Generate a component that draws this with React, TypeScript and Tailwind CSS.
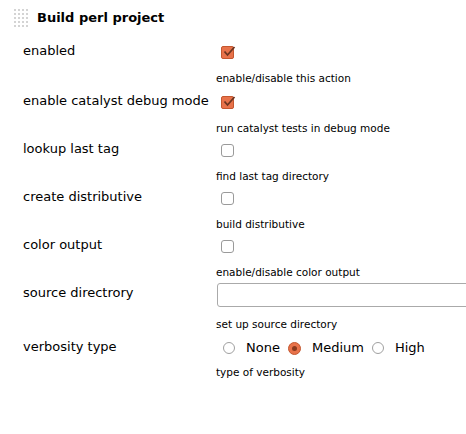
import React from 'react'

type Field = {
  label: string
  help: string
  kind: 'check' | 'text' | 'radio'
  checked?: boolean
}

const fields: Field[] = [
  { label: 'enabled', help: 'enable/disable this action', kind: 'check', checked: true },
  { label: 'enable catalyst debug mode', help: 'run catalyst tests in debug mode', kind: 'check', checked: true },
  { label: 'lookup last tag', help: 'find last tag directory', kind: 'check' },
  { label: 'create distributive', help: 'build distributive', kind: 'check' },
  { label: 'color output', help: 'enable/disable color output', kind: 'check' },
  { label: 'source directrory', help: 'set up source directory', kind: 'text' },
  { label: 'verbosity type', help: 'type of verbosity', kind: 'radio' },
]

function Check({ on }: { on?: boolean }) {
  if (!on)
    return <span className="block w-[13px] h-[13px] rounded-[3px] border border-[#9a9a9a] bg-white" />
  return (
    <span className="relative block w-[13px] h-[13px] rounded-[2px] bg-[#e8724a] border border-[#c4572f]">
      <svg viewBox="0 0 14 14" className="absolute left-[0px] top-[-2px] w-[14px] h-[14px]">
        <path d="M2.5 6.5 L5.5 10 L12.5 2" fill="none" stroke="#6a3420" strokeWidth="1.8" />
      </svg>
    </span>
  )
}

function Radio({ on }: { on?: boolean }) {
  if (!on)
    return <span className="block w-[12px] h-[12px] rounded-full border border-[#a0a0a0] bg-white" />
  return (
    <span className="flex items-center justify-center w-[13px] h-[13px] rounded-full bg-[#e8724a] border border-[#c4572f]">
      <span className="w-[5px] h-[5px] rounded-full bg-[#8a3a1e]" />
    </span>
  )
}

function Handle() {
  return (
    <div className="grid grid-cols-4 gap-[2px] w-[14px]">
      {Array.from({ length: 20 }).map((_, i) => (
        <span key={i} className="w-[2px] h-[2px] bg-[#d4d4d4]" />
      ))}
    </div>
  )
}

export default function App() {
  return (
    <div className="w-[466px] h-[434px] bg-white text-black font-['DejaVu_Sans',sans-serif] overflow-hidden">
      <div className="flex items-center h-[35px] pl-[14px]">
        <Handle />
        <span className="ml-[9px] text-[13px] font-bold">Build perl project</span>
      </div>

      <div className="pt-[3px]">
        {fields.map((f, i) => (
          <div key={f.label} className={f.kind !== 'check' ? 'h-[54px]' : i === 0 ? 'h-[50px]' : 'h-[48px]'}>
            <div className="flex items-center h-[26px]">
              <div className="w-[216px] shrink-0 pl-[23px] text-[13px]">{f.label}</div>
              {f.kind === 'check' && (
                <div className="pl-[5px] pt-[2px]"><Check on={f.checked} /></div>
              )}
              {f.kind === 'text' && (
                <input className="w-[300px] shrink-0 h-[24px] mt-[4px] ml-[1px] border border-[#aaa] rounded-[3px] bg-white" />
              )}
              {f.kind === 'radio' && (
                <div className="flex items-center text-[13px] pl-[7px] pt-[2px]">
                  <Radio />
                  <span className="ml-[11px] mr-[8px]">None</span>
                  <Radio on />
                  <span className="ml-[11px] mr-[8px]">Medium</span>
                  <Radio />
                  <span className="ml-[11px]">High</span>
                </div>
              )}
            </div>
            <div
              className={
                'pl-[216px] text-[10.5px] leading-[14px] ' +
                (f.kind === 'text' ? 'pt-[11px]' : f.kind === 'radio' ? 'pt-[5px]' : 'pt-[7px]')
              }
            >
              {f.help}
            </div>
          </div>
        ))}
      </div>
    </div>
  )
}
